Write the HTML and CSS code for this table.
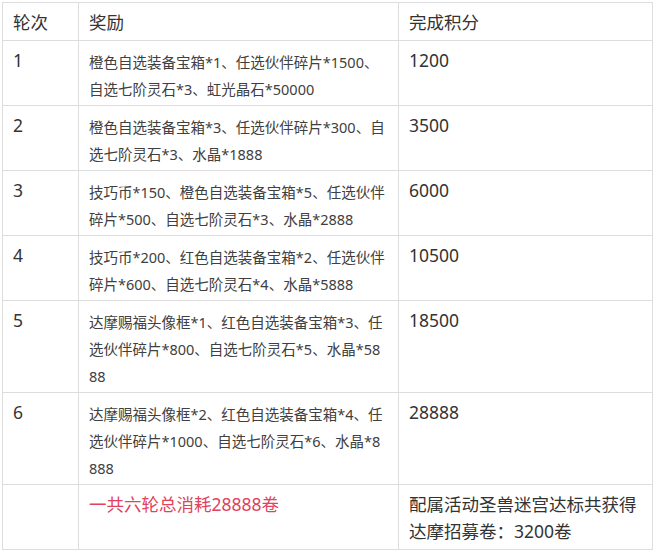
FILE: index.html
```html
<!DOCTYPE html>
<html lang="zh-CN">
<head>
<meta charset="utf-8">
<title>奖励表</title>
<link rel="stylesheet" href="styles.css">
</head>
<body>
<table class="tbl">
  <colgroup>
    <col class="c1">
    <col class="c2">
    <col class="c3">
  </colgroup>
  <tr>
    <td>轮次</td>
    <td>奖励</td>
    <td>完成积分</td>
  </tr>
  <tr>
    <td>1</td>
    <td class="reward">橙色自选装备宝箱*1、任选伙伴碎片*1500、自选七阶灵石*3、虹光晶石*50000</td>
    <td>1200</td>
  </tr>
  <tr>
    <td>2</td>
    <td class="reward">橙色自选装备宝箱*3、任选伙伴碎片*300、自选七阶灵石*3、水晶*1888</td>
    <td>3500</td>
  </tr>
  <tr>
    <td>3</td>
    <td class="reward">技巧币*150、橙色自选装备宝箱*5、任选伙伴碎片*500、自选七阶灵石*3、水晶*2888</td>
    <td>6000</td>
  </tr>
  <tr>
    <td>4</td>
    <td class="reward">技巧币*200、红色自选装备宝箱*2、任选伙伴碎片*600、自选七阶灵石*4、水晶*5888</td>
    <td>10500</td>
  </tr>
  <tr>
    <td>5</td>
    <td class="reward">达摩赐福头像框*1、红色自选装备宝箱*3、任选伙伴碎片*800、自选七阶灵石*5、水晶*5888</td>
    <td>18500</td>
  </tr>
  <tr>
    <td>6</td>
    <td class="reward">达摩赐福头像框*2、红色自选装备宝箱*4、任选伙伴碎片*1000、自选七阶灵石*6、水晶*8888</td>
    <td>28888</td>
  </tr>
  <tr>
    <td></td>
    <td class="red">一共六轮总消耗28888卷</td>
    <td>配属活动圣兽迷宫达标共获得达摩招募卷：3200卷</td>
  </tr>
</table>
</body>
</html>
```

FILE: styles.css
```css
html, body {
  margin: 0;
  padding: 0;
  background: #ffffff;
}

body {
  font-family: "Noto Sans", "Noto Sans CJK SC", sans-serif;
  color: #333333;
}

.tbl {
  margin: 2px 0 0 2px;
  width: 650px;
  table-layout: fixed;
  border-collapse: collapse;
  border: 1px solid #dddddd;
}

.c1 { width: 76px; }
.c2 { width: 320px; }
.c3 { width: 254px; }

.tbl td {
  border: 1px solid #dddddd;
  padding: 6px 10px 4px 10px;
  vertical-align: top;
  font-size: 17.5px;
  line-height: 27px;
  word-break: break-all;
}

.tbl td.reward {
  font-size: 14.5px;
  padding-top: 8px;
  padding-bottom: 2px;
  color: #404040;
}

.tbl td.red {
  color: #e0415c;
}
```
